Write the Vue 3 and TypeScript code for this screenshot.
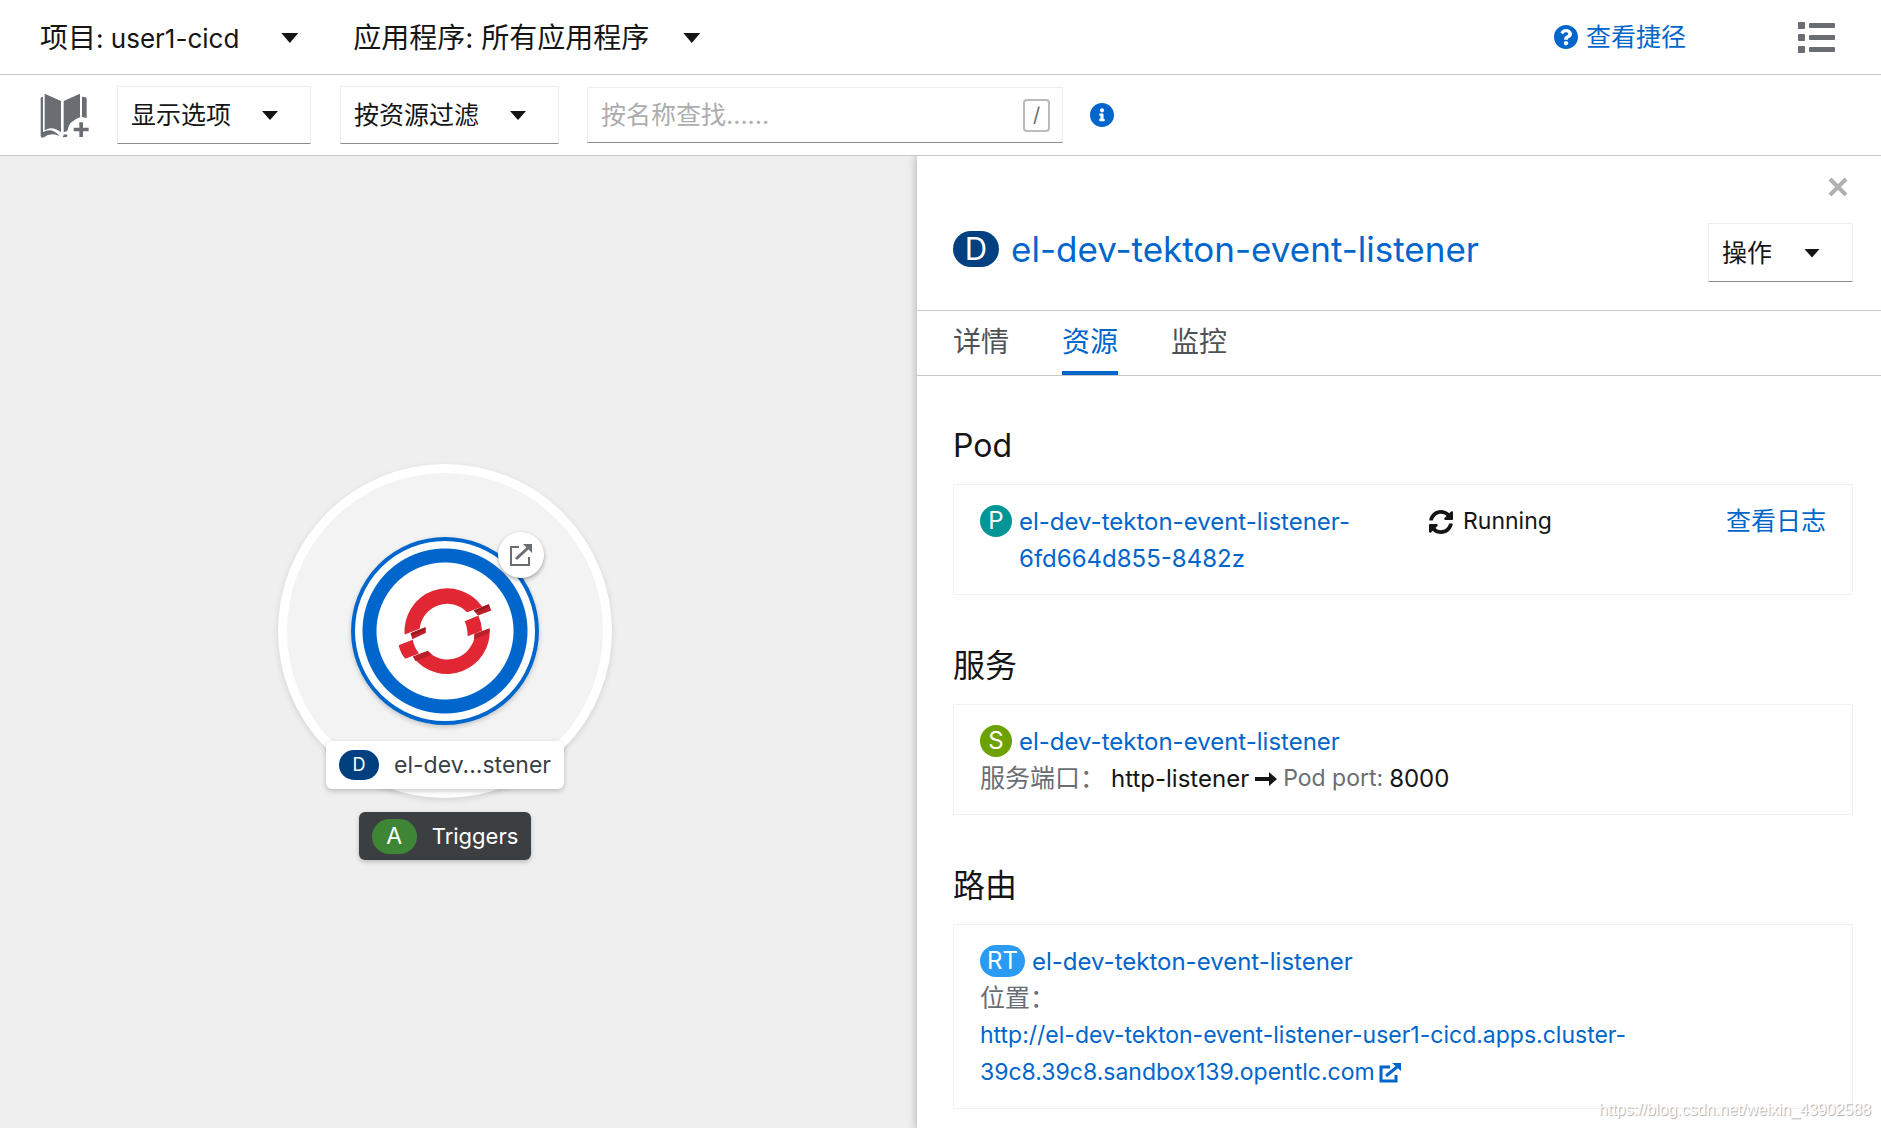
<script setup lang="ts">
import { ref } from 'vue'

interface Tab {
  id: string
  label: string
}

const tabs: Tab[] = [
  { id: 'details', label: '详情' },
  { id: 'resources', label: '资源' },
  { id: 'monitoring', label: '监控' },
]
const activeTab = ref('resources')
const search = ref('')
const workload = 'el-dev-tekton-event-listener'
const podName = `${workload}-6fd664d855-8482z`
const routeUrl = `http://${workload}-user1-cicd.apps.cluster-39c8.39c8.sandbox139.opentlc.com`
</script>

<template>
  <div class="page">
    <header class="context-bar">
      <button type="button" class="context-menu" aria-haspopup="listbox">
        <span>项目<span class="latin">: user1-cicd</span></span>
        <span class="caret caret-large"></span>
      </button>
      <button type="button" class="context-menu applications" aria-haspopup="listbox">
        <span>应用程序: 所有应用程序</span>
        <span class="caret caret-large"></span>
      </button>
      <div class="context-actions">
        <a href="#shortcuts" class="shortcuts">
          <svg class="icon-24" viewBox="8 8 496 496" aria-hidden="true">
            <path d="M504 256c0 136.997-111.043 248-248 248S8 392.997 8 256C8 119.083 119.043 8 256 8s248 111.083 248 248zM262.655 90c-54.497 0-89.255 22.957-116.549 63.758-3.536 5.286-2.353 12.415 2.715 16.258l34.699 26.31c5.205 3.947 12.621 3.008 16.665-2.122 17.864-22.658 30.113-35.797 57.303-35.797 20.429 0 45.698 13.148 45.698 32.958 0 14.976-12.363 22.667-32.534 33.976C247.128 238.528 216 254.941 216 296v4c0 6.627 5.373 12 12 12h56c6.627 0 12-5.373 12-12v-1.333c0-28.462 83.186-29.647 83.186-106.667 0-58.002-60.165-102-116.531-102zM256 338c-25.365 0-46 20.635-46 46 0 25.364 20.635 46 46 46s46-20.636 46-46c0-25.365-20.635-46-46-46z" />
          </svg>
          <span>查看捷径</span>
        </a>
        <button type="button" class="icon-button" aria-label="列表视图">
          <svg class="list-icon" viewBox="0 0 37 31" aria-hidden="true">
            <rect x="0" y="0" width="7" height="7" rx="1" />
            <rect x="0" y="12" width="7" height="7" rx="1" />
            <rect x="0" y="24" width="7" height="7" rx="1" />
            <rect x="11" y="1" width="26" height="5" rx="1" />
            <rect x="11" y="13" width="26" height="5" rx="1" />
            <rect x="11" y="25" width="26" height="5" rx="1" />
          </svg>
        </button>
      </div>
    </header>

    <div class="toolbar">
      <button type="button" class="icon-button catalog" aria-label="添加到项目">
        <svg class="book-icon" viewBox="18 18 147 135" aria-hidden="true">
          <path d="M32 20 81 42V136Q54 115 32 130Z" />
          <path d="M138 20 89 42V136L100 132Q104 102 138 91Z" />
          <path d="M20 33Q20 30 27 29V135Q54 120 77 147Q52 134 27 152Q20 152 20 147Z" />
          <path d="M144 29Q158 29 158 35V93L144 90Z" />
          <path d="M86 151 90 142 101 143 98 150Z" />
          <path d="M136 106H147V122H164V133H147V150H136V133H119V122H136Z" />
        </svg>
      </button>
      <button type="button" class="menu-toggle display-options" aria-haspopup="menu">
        <span>显示选项</span><span class="caret"></span>
      </button>
      <button type="button" class="menu-toggle resource-filter" aria-haspopup="menu">
        <span>按资源过滤</span><span class="caret"></span>
      </button>
      <div class="search">
        <input v-model="search" type="text" placeholder="按名称查找......" aria-label="按名称查找" />
        <kbd>/</kbd>
      </div>
      <button type="button" class="icon-button info" aria-label="查找帮助">
        <svg class="icon-24" viewBox="8 8 496 496" aria-hidden="true">
          <path d="M256 8C119.043 8 8 119.083 8 256c0 136.997 111.043 248 248 248s248-111.003 248-248C504 119.083 392.957 8 256 8zm0 110c23.196 0 42 18.804 42 42s-18.804 42-42 42-42-18.804-42-42 18.804-42 42-42zm56 254c0 6.627-5.373 12-12 12h-88c-6.627 0-12-5.373-12-12v-24c0-6.627 5.373-12 12-12h12v-64h-12c-6.627 0-12-5.373-12-12v-24c0-6.627 5.373-12 12-12h64c6.627 0 12 5.373 12 12v100h12c6.627 0 12 5.373 12 12v24z" />
        </svg>
      </button>
    </div>

    <main class="content">
      <section class="topology" aria-label="拓扑">
        <div class="node">
          <div class="node-group">
            <div class="workload">
              <svg class="openshift" viewBox="55 81 282 260" aria-hidden="true">
                <path fill="#e12734" d="M75 220A128 128 0 0 1 308 137L262 153A83 83 0 0 0 120 203Z" />
                <path fill="#e12734" d="M330 202A128 128 0 0 1 102 290L153 278A83 83 0 0 0 284 231Z" />
                <path fill="#e12734" d="M255 180 296 163Q306 184 307 209L264 225Q264 200 255 180Z" />
                <path fill="#e12734" d="M57 252 99 236Q103 258 118 277L77 293Q62 275 57 252Z" />
                <path fill="#ba2029" d="M282 148 327 129 335 148 295 163Z" />
                <path fill="#981a20" d="M282 148 327 129 330 136 290 154Z" />
                <path fill="#ba2029" d="M284 218 330 201Q330 210 328 216L283 234Z" />
                <path fill="#ba2029" d="M93 216 137 198 139 215 98 234Z" />
                <path fill="#981a20" d="M93 216 137 198 138 206 95 223Z" />
                <path fill="#ba2029" d="M99 286 144 269 157 280 108 300Z" />
              </svg>
            </div>
            <a href="#open-url" class="decorator" aria-label="打开 URL">
              <svg viewBox="0 0 24 24" aria-hidden="true">
                <path fill="none" stroke="#6a6e73" stroke-width="2" d="M10 4H2V22H20V14" />
                <path fill="none" stroke="#6a6e73" stroke-width="3" d="M7 16 20 4" />
                <path fill="#6a6e73" d="M14 1H23V10Z" />
              </svg>
            </a>
          </div>
          <div class="node-label">
            <span class="node-badge">D</span>
            <span>el-dev...stener</span>
          </div>
          <div class="app-label">
            <span class="app-badge">A</span>
            <span>Triggers</span>
          </div>
        </div>
      </section>

      <aside class="side-panel">
        <div class="panel-head">
          <button type="button" class="icon-button close" aria-label="关闭">
            <svg viewBox="0 0 20 20" aria-hidden="true">
              <path d="M2 2 18 18M18 2 2 18" />
            </svg>
          </button>
          <div class="title-row">
            <h1>
              <span class="badge badge-deployment">D</span>
              <a href="#deployment">{{ workload }}</a>
            </h1>
            <button type="button" class="menu-toggle actions" aria-haspopup="menu">
              <span>操作</span><span class="caret"></span>
            </button>
          </div>
        </div>

        <div class="tabs" role="tablist">
          <button
            v-for="tab in tabs"
            :key="tab.id"
            type="button"
            role="tab"
            :aria-selected="tab.id === activeTab"
            :class="['tab', { active: tab.id === activeTab }]"
            @click="activeTab = tab.id"
          >
            {{ tab.label }}
          </button>
        </div>

        <div class="panel-body">
          <section>
            <h2>Pod</h2>
            <div class="card pod-card">
              <div class="resource">
                <span class="badge badge-pod">P</span>
                <a href="#pod">{{ podName }}</a>
              </div>
              <div class="status">
                <svg class="icon-24" viewBox="8 8 496 496" aria-hidden="true">
                  <path d="M370.72 133.28C339.458 104.008 298.888 87.962 255.848 88c-77.458.068-144.328 53.178-162.791 126.85-1.344 5.363-6.122 9.15-11.651 9.15H24.103c-7.498 0-13.194-6.807-11.807-14.176C33.933 94.924 134.813 8 256 8c66.448 0 126.791 26.136 171.315 68.685L463.03 40.97C478.149 25.851 504 36.559 504 57.941V192c0 13.255-10.745 24-24 24H345.941c-21.382 0-32.09-25.851-16.971-40.971l41.75-41.749zM32 296h134.059c21.382 0 32.09 25.851 16.971 40.971l-41.75 41.75c31.262 29.273 71.835 45.319 114.876 45.28 77.418-.07 144.315-53.144 162.787-126.849 1.344-5.363 6.122-9.15 11.651-9.15h57.304c7.498 0 13.194 6.807 11.807 14.176C478.067 417.076 377.187 504 256 504c-66.448 0-126.791-26.136-171.315-68.685L48.97 471.03C33.851 486.149 8 475.441 8 454.059V320c0-13.255 10.745-24 24-24z" />
                </svg>
                <span>Running</span>
              </div>
              <a href="#logs" class="cjk">查看日志</a>
            </div>
          </section>

          <section>
            <h2>服务</h2>
            <div class="card">
              <div class="resource">
                <span class="badge badge-service">S</span>
                <a href="#service">{{ workload }}</a>
              </div>
              <div class="ports">
                <span class="cjk muted">服务端口：</span>
                <span class="port">http-listener</span>
                <svg class="arrow" viewBox="0 0 22 14" aria-hidden="true">
                  <path d="M0 5H14V0L22 7 14 14V9H0Z" />
                </svg>
                <span class="muted">Pod port:</span>
                <span class="port">8000</span>
              </div>
            </div>
          </section>

          <section>
            <h2>路由</h2>
            <div class="card">
              <div class="resource">
                <span class="badge badge-route">RT</span>
                <a href="#route">{{ workload }}</a>
              </div>
              <div class="cjk muted">位置：</div>
              <a href="#location">{{ routeUrl }}<svg class="external" viewBox="0 0 22 20" aria-hidden="true">
                <path fill="none" stroke="#06c" stroke-width="3" d="M11 4H2V18H17V12" />
                <path fill="none" stroke="#06c" stroke-width="3" d="M7 13 18 4" />
                <path fill="#06c" d="M13 0H22V8Z" />
              </svg></a>
            </div>
          </section>
        </div>
      </aside>
    </main>

    <div class="watermark">https://blog.csdn.net/weixin_43902588</div>
  </div>
</template>

<style>
body {
  margin: 0;
}
</style>

<style scoped>
.page {
  position: relative;
  display: flex;
  flex-direction: column;
  min-height: 100vh;
  background: #fff;
  color: #151515;
  font-family: Inter, "Noto Sans CJK SC", sans-serif;
  font-size: 23px;
  line-height: 37px;
}

.page *,
.page *::before {
  box-sizing: border-box;
}

button,
input {
  padding: 0;
  border: 0;
  background: none;
  color: inherit;
  font: inherit;
}

a {
  color: #06c;
  text-decoration: none;
}

svg {
  display: block;
}

.cjk {
  font-size: 25px;
}

.muted {
  color: #6a6e73;
}

.icon-24 {
  flex: none;
  width: 24px;
  height: 24px;
  fill: currentColor;
}

.icon-button {
  display: flex;
  flex: none;
  color: #6a6e73;
}

.caret {
  flex: none;
  width: 16px;
  height: 9px;
  background: #151515;
  clip-path: polygon(0 0, 100% 0, 50% 100%);
}

.caret-large {
  width: 17px;
  height: 10px;
}

.context-bar {
  display: flex;
  align-items: center;
  gap: 55px;
  height: 75px;
  padding: 0 46px 0 40px;
  border-bottom: 1px solid #c7c7c7;
}

.context-menu {
  display: flex;
  align-items: center;
  gap: 42px;
  padding-top: 2px;
  font-size: 28px;
}

.applications {
  gap: 34px;
}

.latin {
  font-size: 26px;
}

.context-actions {
  display: flex;
  align-items: center;
  gap: 112px;
  margin-left: auto;
}

.shortcuts {
  display: flex;
  align-items: center;
  gap: 8px;
  font-size: 25px;
}

.list-icon {
  width: 37px;
  height: 31px;
  fill: currentColor;
}

.toolbar {
  display: flex;
  align-items: center;
  height: 81px;
  padding: 0 40px;
  border-bottom: 1px solid #c7c7c7;
}

.book-icon {
  width: 49px;
  height: 45px;
  fill: currentColor;
}

.menu-toggle {
  display: flex;
  align-items: center;
  justify-content: space-between;
  height: 58px;
  padding: 1px 32px 0 13px;
  border: 1px solid #ededed;
  border-bottom-color: #8a8d90;
  font-size: 25px;
}

.display-options {
  width: 194px;
  margin: 0 29px 0 28px;
}

.resource-filter {
  width: 219px;
  margin-right: 28px;
}

.search {
  display: flex;
  align-items: center;
  width: 476px;
  height: 56px;
  padding: 0 12px 0 13px;
  border: 1px solid #ededed;
  border-bottom-color: #8a8d90;
}

.search input {
  flex: 1;
  min-width: 0;
  outline: none;
  font-size: 25px;
}

.search input::placeholder {
  color: #adadad;
  opacity: 1;
}

kbd {
  width: 27px;
  height: 33px;
  border: 2px solid #bababa;
  border-radius: 4px;
  color: #6a6e73;
  font-family: inherit;
  font-size: 20px;
  line-height: 29px;
  text-align: center;
}

.info {
  margin-left: 27px;
  color: #06c;
}

.content {
  display: flex;
  flex: 1;
}

.topology {
  position: relative;
  flex: 1;
  background: #efefef;
}

/* Topology node placed on the free canvas */
.node {
  position: absolute;
  top: 308px;
  left: 278px;
  display: flex;
  flex-direction: column;
  align-items: center;
  width: 334px;
}

.node-group {
  position: relative;
  display: flex;
  align-items: center;
  justify-content: center;
  width: 334px;
  height: 334px;
  border: 9px solid #fff;
  border-radius: 50%;
  background: #f3f3f3;
  box-shadow: 0 2px 6px rgba(0, 0, 0, 0.12);
}

.workload {
  display: flex;
  align-items: center;
  justify-content: center;
  width: 188px;
  height: 188px;
  border: 4px solid #06c;
  border-radius: 50%;
  background: radial-gradient(circle closest-side, #fff 68px, #06c 69px, #06c 82px, #fff 83px);
  box-shadow: 0 2px 5px rgba(0, 0, 0, 0.2);
}

.openshift {
  width: 94px;
  height: 87px;
}

.decorator {
  position: absolute;
  top: 59px;
  right: 59px;
  display: flex;
  align-items: center;
  justify-content: center;
  width: 46px;
  height: 46px;
  border-radius: 50%;
  background: #fff;
  box-shadow: 0 2px 4px rgba(0, 0, 0, 0.35);
}

.decorator svg {
  width: 24px;
  height: 24px;
}

.node-label,
.app-label {
  position: relative;
  display: flex;
  align-items: center;
  gap: 15px;
  height: 48px;
  padding: 0 13px;
  border-radius: 6px;
  box-shadow: 0 2px 5px rgba(0, 0, 0, 0.22);
  white-space: nowrap;
}

.node-label {
  margin-top: -57px;
  background: #fff;
  color: #393f44;
}

.app-label {
  margin-top: 23px;
  background: #3c3f42;
  color: #fff;
  font-size: 22px;
}

.node-badge,
.app-badge {
  width: 40px;
  height: 30px;
  border-radius: 15px;
  background: #004080;
  color: #fff;
  font-size: 18px;
  line-height: 30px;
  text-align: center;
}

.app-badge {
  width: 45px;
  height: 35px;
  border-radius: 18px;
  background: #3e8635;
  font-size: 23px;
  line-height: 35px;
}

.side-panel {
  position: relative;
  flex: 0 0 51.25%;
  min-width: 0;
  background: #fff;
  box-shadow: -1px 0 8px rgba(0, 0, 0, 0.25);
  clip-path: inset(0 0 0 -16px);
}

.panel-head {
  height: 155px;
  padding: 21px 28px 0 36px;
  border-bottom: 1px solid #c7c7c7;
}

.close {
  margin: 0 5px 26px auto;
}

.close svg {
  width: 20px;
  height: 20px;
  fill: none;
  stroke: #b0b0b0;
  stroke-width: 4;
}

.title-row {
  display: flex;
  align-items: flex-start;
  justify-content: space-between;
}

h1 {
  display: flex;
  align-items: center;
  gap: 12px;
  margin: 0;
  padding-top: 6px;
  font-size: 35px;
  font-weight: 400;
  line-height: 40px;
}

.actions {
  width: 145px;
  height: 59px;
}

.tabs {
  display: flex;
  gap: 53px;
  height: 65px;
  padding: 0 36px;
  border-bottom: 1px solid #c7c7c7;
}

.tab {
  height: 64px;
  padding-top: 2px;
  border-bottom: 4px solid transparent;
  color: #4f5255;
  font-size: 28px;
  line-height: 58px;
}

.tab.active {
  border-bottom-color: #06c;
  color: #06c;
}

.panel-body {
  display: flex;
  flex-direction: column;
  gap: 51px;
  padding: 50px 28px 20px 36px;
}

h2 {
  margin: 0 0 18px;
  font-size: 32px;
  font-weight: 400;
  line-height: 40px;
}

.card {
  padding: 18px 26px 17px;
  border: 1px solid #f2f2f2;
}

.pod-card {
  display: grid;
  grid-template-columns: 449fr 297fr auto;
}

.resource {
  display: flex;
  align-items: flex-start;
  gap: 7px;
  font-size: 24px;
}

.badge {
  flex: none;
  width: 32px;
  height: 32px;
  margin-top: 2px;
  border-radius: 16px;
  color: #fff;
  font-size: 24px;
  line-height: 32px;
  text-align: center;
}

.badge-deployment {
  width: 46px;
  height: 36px;
  margin: 0;
  border-radius: 18px;
  background: #004080;
  font-size: 31px;
  line-height: 36px;
}

.badge-pod {
  background: #009596;
}

.badge-service {
  background: #6ca100;
}

.badge-route {
  width: 45px;
  background: #2b9af3;
}

.status {
  display: flex;
  align-items: center;
  gap: 10px;
  height: 37px;
}

.ports {
  display: flex;
  align-items: center;
  gap: 6px;
  height: 37px;
}

.port {
  font-size: 24px;
}

.arrow {
  width: 22px;
  height: 14px;
  fill: #151515;
}

.external {
  display: inline-block;
  width: 22px;
  height: 20px;
  margin-left: 4px;
  vertical-align: -3px;
}

.watermark {
  position: absolute;
  right: 10px;
  bottom: 9px;
  color: #fff;
  font-family: "Liberation Sans", Arial, sans-serif;
  font-size: 16px;
  line-height: 20px;
  text-shadow: 1px 1px 1px #aaa;
}
</style>
